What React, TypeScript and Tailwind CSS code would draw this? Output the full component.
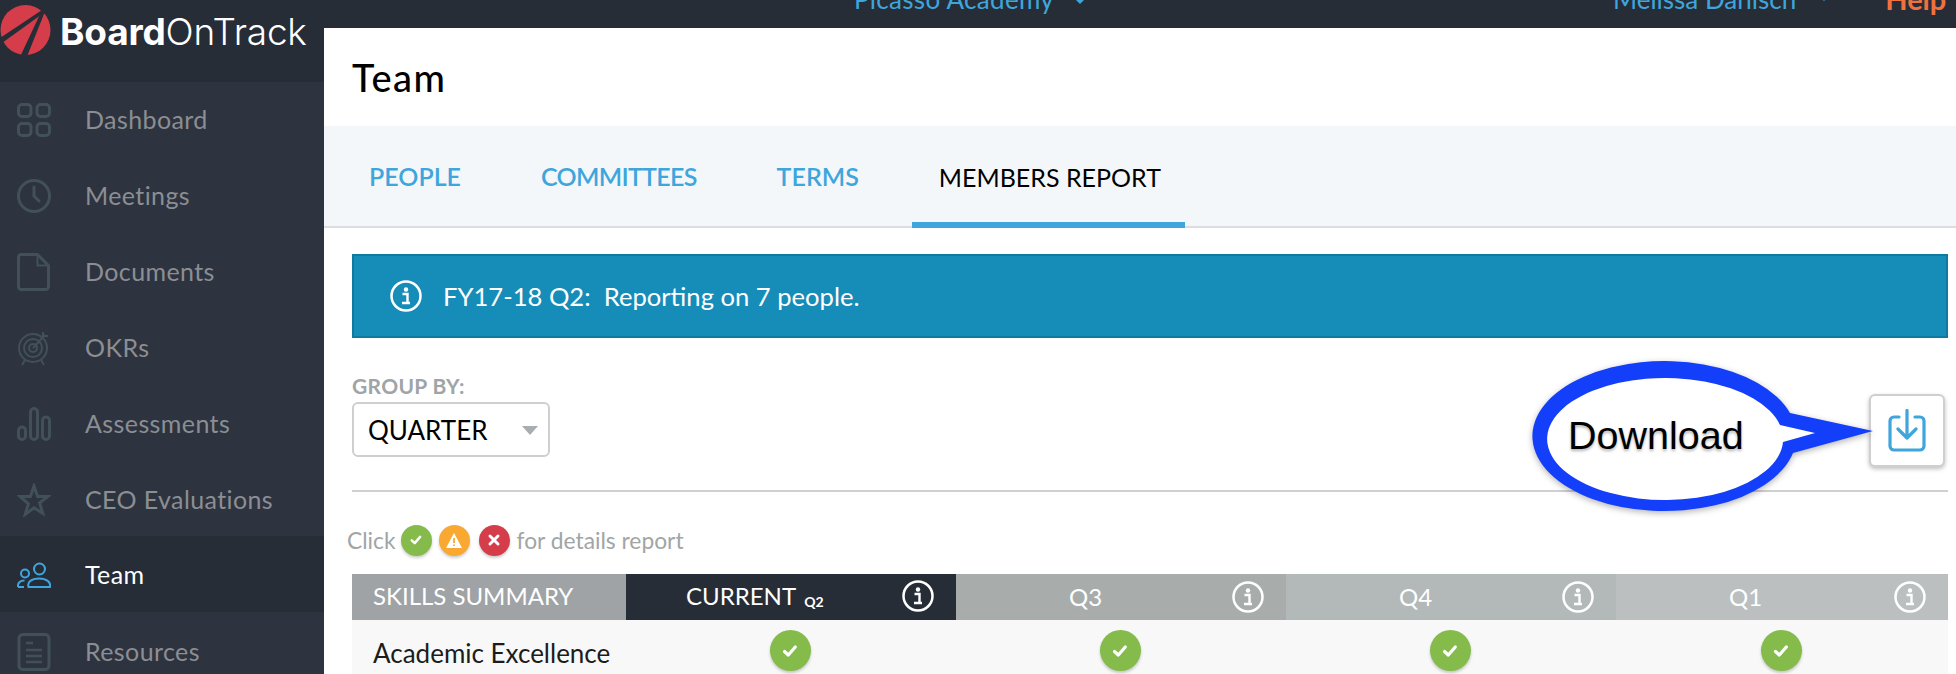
import React from 'react';

const UI_FONT = "font-['Lato','Open_Sans',sans-serif]";

const DashboardIcon = () => (
  <svg width="34" height="34" viewBox="0 0 34 34" fill="none" stroke="currentColor" strokeWidth="3">
    <rect x="1.5" y="1.5" width="12.5" height="12" rx="3.5" />
    <rect x="20" y="1.5" width="12.5" height="12" rx="3.5" />
    <rect x="1.5" y="20.5" width="12.5" height="12" rx="3.5" />
    <rect x="20" y="20.5" width="12.5" height="12" rx="3.5" />
  </svg>
);

const ClockIcon = () => (
  <svg width="34" height="34" viewBox="0 0 34 34" fill="none" stroke="currentColor" strokeWidth="3">
    <circle cx="17" cy="17" r="15.5" />
    <path d="M17 8v9l5 5" strokeLinecap="round" />
  </svg>
);

const DocIcon = () => (
  <svg width="34" height="38" viewBox="0 0 34 38" fill="none" stroke="currentColor" strokeWidth="3">
    <path d="M3.5 1.5h17l11 11v21a3 3 0 0 1-3 3h-25a3 3 0 0 1-2-3v-29a3 3 0 0 1 2-3z" />
    <path d="M20.5 1.5v11h11" strokeWidth="2" />
  </svg>
);

const TargetIcon = () => (
  <svg width="34" height="36" viewBox="0 0 34 36" fill="none" stroke="currentColor" strokeWidth="2">
    <circle cx="16" cy="18" r="14" />
    <circle cx="16" cy="18" r="9" />
    <circle cx="16" cy="18" r="4" />
    <path d="M16 18L28 5M26 2v4h5M8 30l-3 5M24 30l3 5" />
  </svg>
);

const BarsIcon = () => (
  <svg width="34" height="34" viewBox="0 0 34 34" fill="none" stroke="currentColor" strokeWidth="3">
    <rect x="1.5" y="20" width="7" height="12.5" rx="3.5" />
    <rect x="13.5" y="1.5" width="7" height="31" rx="3.5" />
    <rect x="25.5" y="10" width="7" height="22.5" rx="3.5" />
  </svg>
);

const StarIcon = () => (
  <svg width="34" height="34" viewBox="0 0 34 34" fill="none" stroke="currentColor" strokeWidth="3">
    <path d="M17 3l3.6 10.4H31l-8.4 6.4 3.2 10.6L17 24.8l-8.8 6.6 3.2-10.6L3 13.4h10.4z" />
  </svg>
);

const TeamIcon = () => (
  <svg width="34" height="26" viewBox="0 0 34 26" fill="none" stroke="currentColor" strokeWidth="2">
    <circle cx="22.5" cy="7" r="5.5" />
    <circle cx="8" cy="11.5" r="4" />
    <path d="M11.5 25c-1.5-5 3-8.5 10.5-8.5s12 3.5 11 8.5z" />
    <path d="M1 25c-.5-4 2-6.5 6.5-6.5" />
    <path d="M1 25h6" />
  </svg>
);

const ResourcesIcon = () => (
  <svg width="34" height="38" viewBox="0 0 34 38" fill="none" stroke="currentColor" strokeWidth="3">
    <rect x="2" y="1.5" width="30" height="35" rx="4" />
    <path d="M9 10h7M9 17h16M9 23h16M9 29h16" strokeWidth="2.5" />
  </svg>
);

const navItems = [
  { label: 'Dashboard', icon: <DashboardIcon /> },
  { label: 'Meetings', icon: <ClockIcon /> },
  { label: 'Documents', icon: <DocIcon /> },
  { label: 'OKRs', icon: <TargetIcon /> },
  { label: 'Assessments', icon: <BarsIcon /> },
  { label: 'CEO Evaluations', icon: <StarIcon /> },
  { label: 'Team', icon: <TeamIcon />, active: true },
  { label: 'Resources', icon: <ResourcesIcon /> },
];

const Logo = () => (
  <div className="flex h-[82px] items-start bg-[#272d37] pt-[5px]">
    <svg width="51" height="50" viewBox="0 0 51 50" className="shrink-0">
      <circle cx="25.5" cy="25" r="25" fill="#d43d49" />
      <path d="M0 33L42 5l3 2L2 38z" fill="#272d37" />
      <path d="M19 54L42 5l3 1.5L26 54z" fill="#272d37" />
    </svg>
    <div className="ml-[9px] mt-[4px] whitespace-nowrap font-['Inter',sans-serif] text-[37px] leading-[46px] tracking-[-0.2px] text-white">
      <span className="font-bold">Board</span>
      <span className="font-light">OnTrack</span>
    </div>
  </div>
);

const Sidebar = () => (
  <aside className={`w-[324px] shrink-0 bg-[#2e3340] ${UI_FONT}`}>
    <Logo />
    <nav>
      {navItems.map((item) => (
        <div
          key={item.label}
          className={
            item.active
              ? '-mt-[2px] mb-[2px] flex h-[76px] items-center gap-[34px] bg-[#272d37] pl-[17px] pt-[2px] text-white'
              : 'flex h-[76px] items-center gap-[34px] pl-[17px] text-[#8b8e92]'
          }
        >
          <span className={item.active ? 'flex w-[34px] justify-center text-[#3ea6dc]' : 'flex w-[34px] justify-center text-[#415059]'}>
            {item.icon}
          </span>
          <span className="text-[25px] tracking-[0.4px]">{item.label}</span>
        </div>
      ))}
    </nav>
  </aside>
);

const InfoIcon = () => (
  <svg width="32" height="32" viewBox="0 0 32 32" fill="none" className="shrink-0">
    <circle cx="16" cy="16" r="14.5" stroke="white" strokeWidth="2.5" />
    <circle cx="16" cy="9.5" r="2.2" fill="white" />
    <path d="M12.5 14h5v9h2.5M12 23h8M12.5 14h4" stroke="white" strokeWidth="2.4" />
  </svg>
);

const StatusDot = ({ color, size, children }: { color: string; size: string; children: React.ReactNode }) => (
  <span className={`flex items-center justify-center rounded-full shadow-[0_2px_3px_rgba(0,0,0,0.2)] ${color} ${size}`}>
    {children}
  </span>
);

const Check = ({ size = 18 }: { size?: number }) => (
  <svg width={size} height={size} viewBox="0 0 18 18" fill="none" stroke="white" strokeWidth="3.2" strokeLinecap="round" strokeLinejoin="round">
    <path d="M3.5 9.5l3.800 3.500 7-8" />
  </svg>
);

const GreenCheck = () => (
  <StatusDot color="bg-[#84bb4a]" size="h-[41px] w-[41px]">
    <Check />
  </StatusDot>
);

const quarters = [
  { label: 'Q3', bg: 'bg-[#a8adac]' },
  { label: 'Q4', bg: 'bg-[#b3b8b8]' },
  { label: 'Q1', bg: 'bg-[#bbbfc0]' },
];

const SkillsTable = () => (
  <div className="mt-[18px] grid grid-cols-[274px_330px_330px_330px_332px]">
    <div className="flex h-[46px] items-center bg-[#9fa3a5] pb-[2px] pl-[21px] text-[24px] text-white">SKILLS SUMMARY</div>
    <div className="flex h-[46px] items-center bg-[#272d37] pb-[2px] pl-[60px] text-white">
      <span className="text-[24px]">CURRENT</span>
      <span className="ml-[8px] mt-[10px] text-[14px] font-bold">Q2</span>
      <span className="ml-auto mr-[22px]"><InfoIcon /></span>
    </div>
    {quarters.map((q) => (
      <div key={q.label} className={`flex h-[46px] items-center justify-between pb-[1px] pl-[113px] pr-[22px] text-white ${q.bg}`}>
        <span className="text-[24px]">{q.label}</span>
        <InfoIcon />
      </div>
    ))}
    <div className="flex h-[70px] items-start whitespace-nowrap bg-[#f8f8f8] pl-[21px] pt-[16px] text-[26px] leading-[34px] text-[#1c1c1c]">
      Academic Excellence
    </div>
    {[0, 1, 2, 3].map((i) => (
      <div key={i} className="flex h-[70px] justify-center bg-[#f8f8f8] pr-[2px] pt-[10px]">
        <GreenCheck />
      </div>
    ))}
  </div>
);

const DownloadCallout = () => (
  <div className="absolute left-[1168px] top-[-24px] z-10 h-[175px] w-[365px]">
    <svg width="365" height="175" viewBox="1520 350 365 175" className="drop-shadow-[0_2px_3px_rgba(0,0,0,0.3)]">
      <path d="M1790 413L1873 431L1793 453A132 75 0 1 1 1790 413Z" fill="#133ffb" />
      <path d="M1780 425L1815 433L1783 442A118 61 0 1 1 1780 425Z" fill="white" />
    </svg>
    <span className="absolute left-[48px] top-[60px] whitespace-nowrap font-['Liberation_Sans',Arial,sans-serif] text-[39.5px] leading-[50px] text-black [text-shadow:0_2px_3px_rgba(0,0,0,0.3)]">
      Download
    </span>
  </div>
);

const Main = () => (
  <main className={`flex min-w-0 flex-1 flex-col ${UI_FONT}`}>
    {/* top bar, cut off by the edge of the picture */}
    <div className="relative flex h-[28px] shrink-0 items-end overflow-hidden bg-[#272d37] pb-[11px] text-[26px] leading-[36px] text-[#3ea6dc]">
      <span className="ml-[530px] whitespace-nowrap tracking-[0.3px]">Picasso Academy</span>
      <svg width="14" height="8" viewBox="0 0 14 8" className="mb-[12px] ml-[19px] shrink-0"><path d="M1 1l6 6 6-6z" fill="#3ea6dc" /></svg>
      <span className="ml-[526px] whitespace-nowrap">Melissa Danisch</span>
      <svg width="14" height="8" viewBox="0 0 14 8" className="mb-[15px] ml-[21px] shrink-0"><path d="M1 1l6 6 6-6z" fill="#3ea6dc" /></svg>
      <span className="ml-[54px] text-[29px] font-bold text-[#f0703f]">Help</span>
    </div>

    <div className="flex h-[98px] shrink-0 items-center pl-[28px] pt-[1px] text-[38px] font-medium tracking-[1.5px] text-black">Team</div>

    <div className="flex h-[102px] shrink-0 items-stretch gap-[26px] border-b-2 border-[#dcdde0] bg-[#f4f7fa] pl-[18px] text-[25px]">
      <div className="flex items-center px-[27px] pt-[2px] font-semibold text-[#3ea6dc]">PEOPLE</div>
      <div className="flex items-center px-[27px] pt-[2px] font-semibold tracking-[-0.7px] text-[#3ea6dc]">COMMITTEES</div>
      <div className="flex items-center px-[27px] pt-[2px] font-semibold text-[#3ea6dc]">TERMS</div>
      <div className="-mb-[2px] flex items-center border-b-[6px] border-[#3ea6dc] pl-[27px] pr-[24px] pt-[8px] text-black">MEMBERS REPORT</div>
    </div>

    <div className="ml-[28px] mr-[8px] mt-[26px] flex flex-col">
      <div className="flex h-[84px] items-center border-2 border-[#0f7aa0] bg-[#168cb9] pl-[36px] text-[25.6px] text-white">
        <InfoIcon />
        <span className="ml-[21px] whitespace-pre">FY17-18 Q2:  Reporting on 7 people.</span>
      </div>

      <div className="relative mt-[36px] flex items-start justify-between">
        <div>
          <div className="mb-[4px] h-[24px] text-[21px] font-bold leading-[24px] tracking-[0.3px] text-[#a0a4a6]">GROUP BY:</div>
          <div className="flex h-[55px] w-[198px] items-center justify-between rounded-[6px] border-2 border-[#cfcfcf] pl-[14px] pr-[10px] pt-[1px] text-[26px] text-black">
            QUARTER
            <svg width="16" height="9" viewBox="0 0 16 9"><path d="M0 0h16L8 9z" fill="#a8adb0" /></svg>
          </div>
        </div>
        <button className="mr-[3px] mt-[20px] flex h-[73px] w-[76px] items-center justify-center rounded-[6px] border-2 border-[#cfcfcf] bg-white shadow-[0_2px_4px_rgba(0,0,0,0.25)]">
          <svg width="38" height="43" viewBox="0 0 38 43" fill="none" stroke="#3ea6dc" strokeWidth="3.2" strokeLinecap="round" strokeLinejoin="round">
            <path d="M11 8H6a4 4 0 0 0-4 4V37a4 4 0 0 0 4 4h26a4 4 0 0 0 4-4V12a4 4 0 0 0-4-4h-5" />
            <path d="M19 1.5V29M10 20l9 9 9-9" />
          </svg>
        </button>
        <DownloadCallout />
      </div>

      <div className="mt-[23px] h-[2px] bg-[#d0d0d0]" />

      <div className="-ml-[5px] mt-[32px] flex h-[32px] items-center text-[22.8px] text-[#a0a5a6]">
        <span>Click</span>
        <span className="ml-[5px]">
          <StatusDot color="bg-[#84bb4a]" size="h-[31px] w-[31px]"><Check size={14} /></StatusDot>
        </span>
        <span className="ml-[7px]">
          <StatusDot color="bg-[#f9a832]" size="h-[31px] w-[31px]">
            <svg width="16" height="15" viewBox="0 0 16 15"><path d="M8 0l8 15H0z" fill="white" /><path d="M8 5v5M8 11.5v1.5" stroke="#f9a832" strokeWidth="1.8" /></svg>
          </StatusDot>
        </span>
        <span className="ml-[9px]">
          <StatusDot color="bg-[#d43d49]" size="h-[31px] w-[31px]">
            <svg width="14" height="14" viewBox="0 0 14 14" stroke="white" strokeWidth="3" strokeLinecap="round"><path d="M3 3l8 8M11 3l-8 8" /></svg>
          </StatusDot>
        </span>
        <span className="ml-[7px]">for details report</span>
      </div>

      <SkillsTable />
    </div>
  </main>
);

export default function App() {
  return (
    <div className="flex h-[674px] w-[1956px] overflow-hidden bg-white">
      <Sidebar />
      <Main />
    </div>
  );
}
